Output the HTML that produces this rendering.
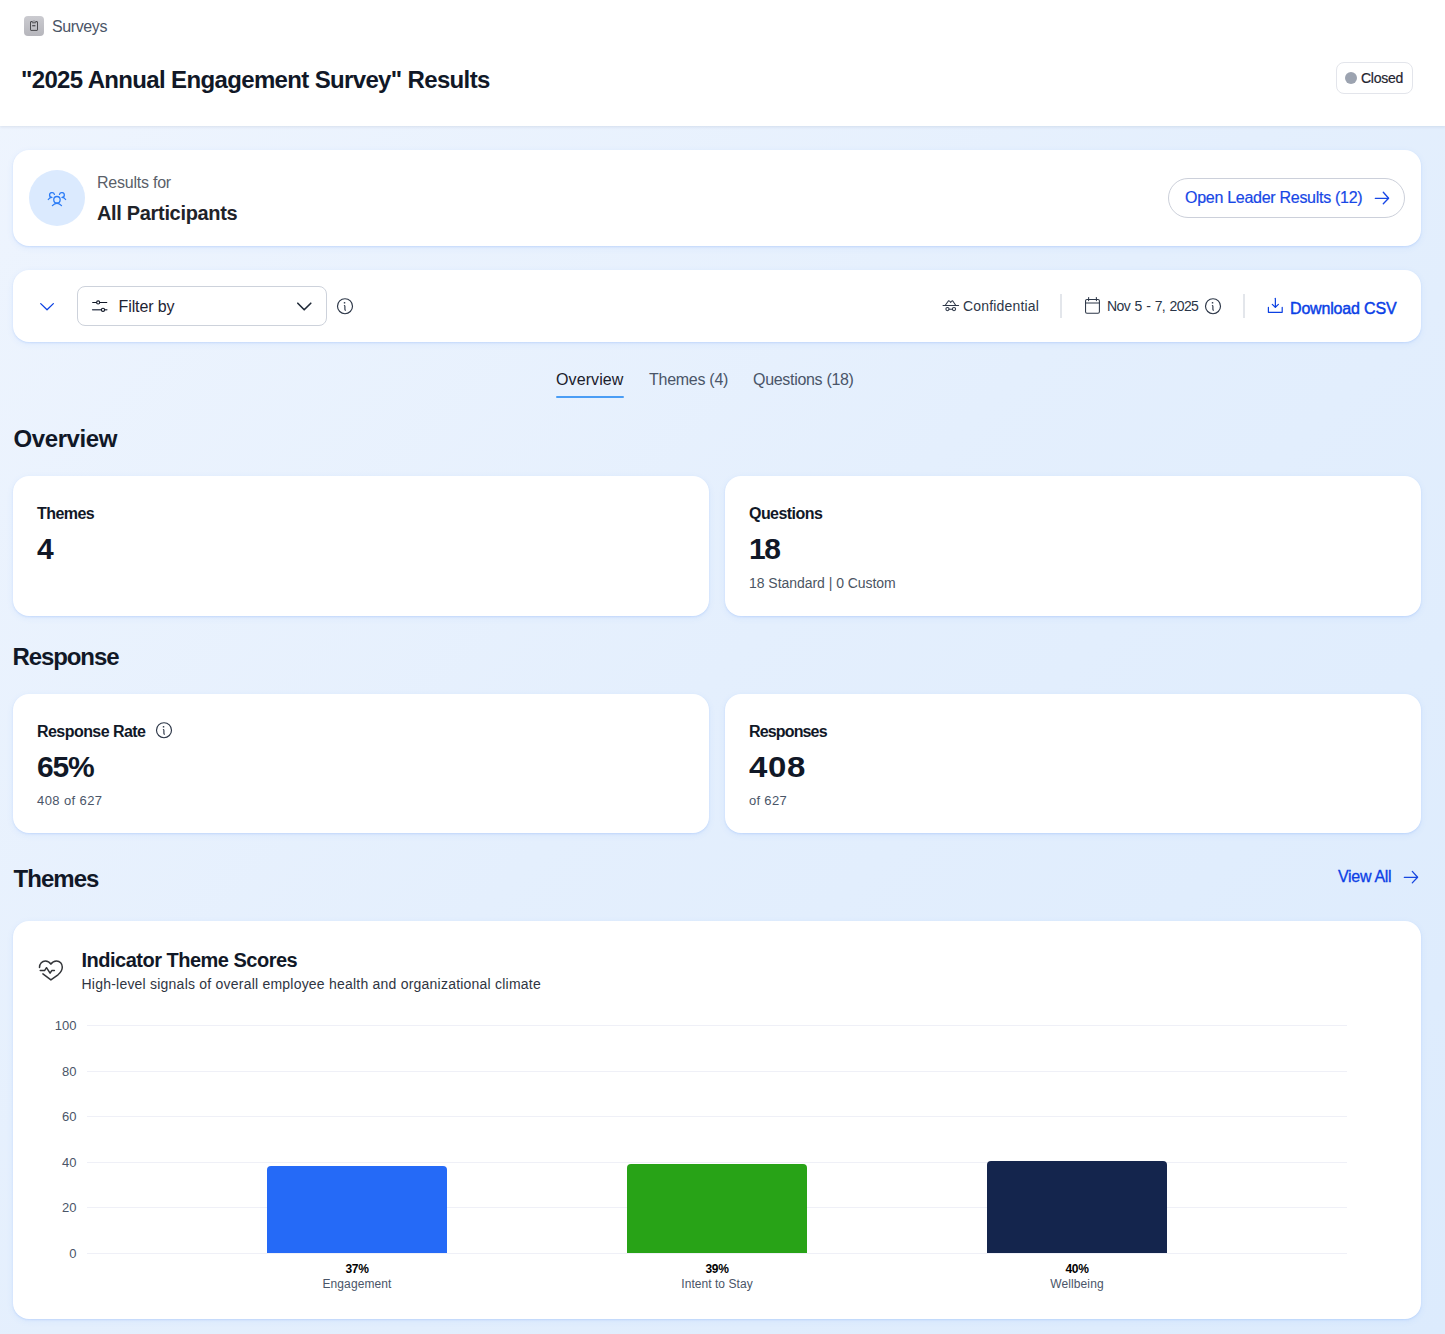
<!DOCTYPE html>
<html>
<head>
<meta charset="utf-8">
<style>
*{margin:0;padding:0;box-sizing:border-box;}
html,body{width:1445px;height:1334px;overflow:hidden;}
body{position:relative;font-family:"Liberation Sans",sans-serif;background:linear-gradient(135deg,#eff5fe 0%,#e4effd 50%,#dcebfd 100%);}
.a{position:absolute;}
.t{position:absolute;line-height:1;white-space:nowrap;}
.b{font-weight:bold;}
.hdr{position:absolute;left:0;top:0;width:1445px;height:126px;background:#fff;box-shadow:0 1px 3px rgba(30,50,90,0.10);}
.card{position:absolute;background:#fff;border-radius:16px;box-shadow:0 1px 2px rgba(59,130,246,0.16),0 2px 7px rgba(59,130,246,0.08);}
svg{position:absolute;overflow:visible;}
</style>
</head>
<body>

<!-- HEADER -->
<div class="hdr"></div>
<div class="a" style="left:24px;top:16px;width:20px;height:20px;border-radius:4px;background:linear-gradient(180deg,#cbcbd0,#b6b6bc);"></div>
<svg style="left:18px;top:10px" width="32" height="32" viewBox="0 0 32 32">
  <rect x="12.5" y="11.5" width="7" height="8.9" rx="0.5" fill="none" stroke="#4a4a4e" stroke-width="1"/>
  <path d="M14.1 11.3 V12.4 Q14.1 12.8 14.5 12.8 H17.5 Q17.9 12.8 17.9 12.4 V11.3" fill="#b9b9be" stroke="#4a4a4e" stroke-width="1"/>
  <rect x="14.8" y="10.2" width="2.4" height="1.4" fill="#a5a5aa"/>
  <line x1="14.2" y1="15.7" x2="17.4" y2="15.7" stroke="#505055" stroke-width="1.3"/>
</svg>
<div class="t" style="left:52px;top:18.5px;font-size:16px;color:#4b5567;letter-spacing:-0.4px">Surveys</div>
<div class="t b" style="left:21px;top:67.6px;font-size:24px;color:#111827;letter-spacing:-0.65px">"2025 Annual Engagement Survey" Results</div>

<div class="a" style="left:1336px;top:62px;width:77px;height:32px;border:1px solid #e3e5eb;border-radius:8px;background:#fff"></div>
<div class="a" style="left:1345px;top:72px;width:12px;height:12px;border-radius:50%;background:#9ca3b0"></div>
<div class="t" style="left:1361px;top:71.2px;font-size:14px;color:#1f2430;letter-spacing:-0.25px;-webkit-text-stroke:0.2px #1f2430">Closed</div>

<!-- CARD 1 -->
<div class="card" style="left:13px;top:150px;width:1408px;height:96px"></div>
<div class="a" style="left:29px;top:170px;width:56px;height:56px;border-radius:50%;background:#dbeafe"></div>
<svg style="left:44px;top:186px" width="26" height="24" viewBox="0 0 26 24">
  <g fill="none" stroke="#2b7cf6" stroke-width="1.3" stroke-linecap="round" stroke-linejoin="round">
    <circle cx="12.95" cy="13.7" r="3.2"/>
    <path d="M8.4 19.6 Q12.95 15.0 17.5 19.6"/>
    <path d="M10.4 8.4 A2.45 2.45 0 1 0 7.9 11.45 Q5.5 11.6 4.3 13.5"/>
    <path d="M15.5 8.4 A2.45 2.45 0 1 1 18.0 11.45 Q20.4 11.6 21.6 13.5"/>
  </g>
</svg>
<div class="t" style="left:97px;top:174.6px;font-size:16px;color:#5a5f69;letter-spacing:-0.23px">Results for</div>
<div class="t b" style="left:97px;top:203px;font-size:20px;color:#1f2329;letter-spacing:-0.33px">All Participants</div>

<div class="a" style="left:1168px;top:178px;width:237px;height:40px;border:1px solid #ccd0da;border-radius:20px;background:#fff"></div>
<div class="t" style="left:1185px;top:189.8px;font-size:16px;color:#1747e6;letter-spacing:-0.28px;-webkit-text-stroke:0.2px #1747e6">Open Leader Results (12)</div>
<svg style="left:1370px;top:188px" width="24" height="22" viewBox="0 0 24 22">
  <g fill="none" stroke="#1747e6" stroke-width="1.35" stroke-linecap="round" stroke-linejoin="round"><path d="M5.3 10.3 H18.4"/><path d="M13.3 4.3 L18.6 10.3 L13.3 15.8"/></g>
</svg>

<!-- CARD 2 FILTER -->
<div class="card" style="left:13px;top:270px;width:1408px;height:72px"></div>
<svg style="left:36px;top:296px" width="22" height="20" viewBox="0 0 22 20">
  <path d="M4.72 7.6 L11.04 13.7 L17.36 7.6" fill="none" stroke="#0b40e2" stroke-width="1.3" stroke-linecap="round" stroke-linejoin="round"/>
</svg>
<div class="a" style="left:77px;top:286px;width:250px;height:40px;border:1px solid #cdd2db;border-radius:8px;background:#fff"></div>
<svg style="left:89px;top:296px" width="22" height="20" viewBox="0 0 22 20">
  <g stroke="#111827" stroke-linecap="round">
    <path d="M3.65 6.4 H17.8" stroke-width="1.05"/>
    <path d="M3.65 13.85 H17.8" stroke-width="1.5" stroke="#4b5262"/>
    <circle cx="9.13" cy="6.4" r="1.55" fill="#fff" stroke-width="1.1"/>
    <circle cx="14" cy="13.85" r="1.6" fill="#fff" stroke-width="1.15"/>
  </g>
</svg>
<div class="t" style="left:118.5px;top:298.7px;font-size:16px;color:#1e2433;letter-spacing:-0.1px">Filter by</div>
<svg style="left:297px;top:302px" width="15" height="9" viewBox="0 0 15 9">
  <path d="M0.8 1.2 L7.2 7.8 L13.8 1.2" fill="none" stroke="#1f2937" stroke-width="1.6" stroke-linecap="round" stroke-linejoin="round"/>
</svg>
<svg style="left:334px;top:295px" width="22" height="22" viewBox="0 0 22 22">
  <circle cx="11" cy="11.2" r="7.5" fill="none" stroke="#2d3748" stroke-width="1.15"/>
  <circle cx="10.55" cy="7.75" r="0.85" fill="#2d3748"/><path d="M10.4 10.55 Q10.9 10.7 10.9 11.5 V14.2 Q10.9 14.9 11.4 15.2" fill="none" stroke="#2d3748" stroke-width="1.15" stroke-linecap="round"/>
</svg>

<svg style="left:940px;top:296px" width="22" height="20" viewBox="0 0 22 20">
  <g fill="none" stroke="#2d3748" stroke-width="1.05" stroke-linecap="round" stroke-linejoin="round">
    <path d="M3.05 9.44 H18.6"/><path d="M5.3 9.2 L8.5 4.7 Q9.6 4.6 10.66 6.4 Q11.6 4.6 12.6 4.7 L15.7 9.2"/>
    <circle cx="7.46" cy="13.1" r="1.6"/><circle cx="14" cy="13.1" r="1.6"/><path d="M9.06 13.3 H12.4"/>
  </g>
</svg>
<div class="t" style="left:963px;top:299px;font-size:14px;color:#2d3748;letter-spacing:0.17px">Confidential</div>
<div class="a" style="left:1060px;top:294px;width:2px;height:24px;background:#e3e6eb"></div>
<svg style="left:1082px;top:294px" width="22" height="22" viewBox="0 0 22 22">
  <g fill="none" stroke="#2d3748" stroke-width="1.05" stroke-linecap="round">
    <rect x="3.55" y="5.45" width="13.85" height="13.75" rx="1.4"/><path d="M3.55 9 H17.4" stroke-width="1.2"/><path d="M6.6 3.6 V6.6"/><path d="M14.4 3.6 V6.6"/>
  </g>
</svg>
<div class="t" style="left:1107px;top:299px;font-size:14px;color:#2a3547;letter-spacing:-0.62px;word-spacing:1.2px">Nov 5 - 7, 2025</div>
<svg style="left:1202px;top:295px" width="22" height="22" viewBox="0 0 22 22">
  <circle cx="11" cy="11.2" r="7.5" fill="none" stroke="#2d3748" stroke-width="1.15"/>
  <circle cx="10.55" cy="7.75" r="0.85" fill="#2d3748"/><path d="M10.4 10.55 Q10.9 10.7 10.9 11.5 V14.2 Q10.9 14.9 11.4 15.2" fill="none" stroke="#2d3748" stroke-width="1.15" stroke-linecap="round"/>
</svg>
<div class="a" style="left:1243px;top:294px;width:2px;height:24px;background:#e3e6eb"></div>
<svg style="left:1264px;top:294px" width="24" height="24" viewBox="0 0 24 24">
  <g fill="none" stroke="#0b40e2" stroke-width="1.2" stroke-linecap="round" stroke-linejoin="round">
    <path d="M11.37 4.3 V13"/><path d="M8.28 10.4 L11.37 13.3 L14.4 10.4"/><path d="M4.4 13.3 V18.35 H18.2 V13.3"/>
  </g>
</svg>
<div class="t" style="left:1290px;top:301.2px;font-size:16px;color:#0b3fe6;letter-spacing:-0.17px;-webkit-text-stroke:0.45px #0b3fe6">Download CSV</div>

<!-- TABS -->
<div class="t" style="left:556px;top:371.5px;font-size:16px;color:#1a202c;letter-spacing:0.1px">Overview</div>
<div class="a" style="left:556px;top:396px;width:68px;height:2px;background:#4a9df5;border-radius:1px"></div>
<div class="t" style="left:649px;top:371.5px;font-size:16px;color:#4a5568;letter-spacing:-0.27px">Themes (4)</div>
<div class="t" style="left:753px;top:371.5px;font-size:16px;color:#4a5568;letter-spacing:-0.31px">Questions (18)</div>

<!-- OVERVIEW -->
<div class="t b" style="left:13.5px;top:426.5px;font-size:24px;color:#111827;letter-spacing:-0.4px">Overview</div>
<div class="card" style="left:13px;top:476px;width:696px;height:140px"></div>
<div class="card" style="left:725px;top:476px;width:696px;height:140px"></div>
<div class="t b" style="left:37px;top:505.5px;font-size:16px;color:#111827;letter-spacing:-0.55px">Themes</div>
<div class="t b" style="left:37px;top:534.3px;font-size:30px;color:#111827">4</div>
<div class="t b" style="left:749px;top:505.5px;font-size:16px;color:#111827;letter-spacing:-0.55px">Questions</div>
<div class="t b" style="left:749px;top:534.3px;font-size:30px;color:#111827;letter-spacing:-1.5px">18</div>
<div class="t" style="left:749px;top:576.2px;font-size:14px;color:#4b5563;letter-spacing:-0.04px">18 Standard | 0 Custom</div>

<!-- RESPONSE -->
<div class="t b" style="left:12.5px;top:645px;font-size:24px;color:#111827;letter-spacing:-1.1px">Response</div>
<div class="card" style="left:13px;top:694px;width:696px;height:139px"></div>
<div class="card" style="left:725px;top:694px;width:696px;height:139px"></div>
<div class="t b" style="left:37px;top:723.5px;font-size:16px;color:#111827;letter-spacing:-0.55px">Response Rate</div>
<svg style="left:153px;top:719px" width="22" height="22" viewBox="0 0 22 22">
  <circle cx="11" cy="11.2" r="7.5" fill="none" stroke="#2d3748" stroke-width="1.15"/>
  <circle cx="10.55" cy="7.75" r="0.85" fill="#2d3748"/><path d="M10.4 10.55 Q10.9 10.7 10.9 11.5 V14.2 Q10.9 14.9 11.4 15.2" fill="none" stroke="#2d3748" stroke-width="1.15" stroke-linecap="round"/>
</svg>
<div class="t b" style="left:37px;top:752.4px;font-size:30px;color:#111827;letter-spacing:-1.2px">65%</div>
<div class="t" style="left:37px;top:793.7px;font-size:13px;color:#4a5568;letter-spacing:0.4px">408 of 627</div>
<div class="t b" style="left:749px;top:723.5px;font-size:16px;color:#111827;letter-spacing:-0.85px">Responses</div>
<div class="t b" style="left:749px;top:752.4px;font-size:30px;color:#111827;letter-spacing:0.6px;transform:scaleX(1.1);transform-origin:0 0">408</div>
<div class="t" style="left:749px;top:793.7px;font-size:13px;color:#4a5568;letter-spacing:0.3px">of 627</div>

<!-- THEMES -->
<div class="t b" style="left:13.5px;top:867px;font-size:24px;color:#111827;letter-spacing:-0.95px">Themes</div>
<div class="t" style="left:1338px;top:868.5px;font-size:16px;color:#0b3fe6;letter-spacing:-0.3px;-webkit-text-stroke:0.3px #0b3fe6">View All</div>
<svg style="left:1399px;top:866px" width="24" height="22" viewBox="0 0 24 22">
  <g fill="none" stroke="#1646e0" stroke-width="1.3" stroke-linecap="round" stroke-linejoin="round"><path d="M5.3 11.3 H18.4"/><path d="M13.3 5.4 L18.6 11.3 L13.3 16.9"/></g>
</svg>

<div class="card" style="left:13px;top:921px;width:1408px;height:398px"></div>
<svg style="left:34px;top:954px" width="34" height="32" viewBox="0 0 34 32">
  <g fill="none" stroke="#333539" stroke-width="1.5" stroke-linecap="round" stroke-linejoin="round">
    <path d="M5.5 13.4 C5.6 9.6 8.2 7 11.3 7 C13.9 7 15.8 8.4 16.9 10.2 C18 8.4 19.9 7 22.55 7 C25.9 7 28.3 9.8 28.3 13 C28.3 16.2 26.6 18.6 24 20.8 L16.9 25.9 L8.9 19.9"/>
    <path d="M6.24 16.55 H10.56 L12.5 13.7 L16.07 19.2 L17.75 16.55 H20.4"/>
  </g>
</svg>
<div class="t b" style="left:81.5px;top:950.2px;font-size:20px;color:#111827;letter-spacing:-0.5px">Indicator Theme Scores</div>
<div class="t" style="left:81.5px;top:977px;font-size:14px;color:#2f3542;letter-spacing:0.22px">High-level signals of overall employee health and organizational climate</div>

<!-- CHART -->
<div id="chart"></div>
<div class="a" style="left:87px;top:1025px;width:1260px;height:1px;background:#eff0f7"></div>
<div class="a" style="left:87px;top:1071px;width:1260px;height:1px;background:#eff0f7"></div>
<div class="a" style="left:87px;top:1116px;width:1260px;height:1px;background:#eff0f7"></div>
<div class="a" style="left:87px;top:1162px;width:1260px;height:1px;background:#eff0f7"></div>
<div class="a" style="left:87px;top:1207px;width:1260px;height:1px;background:#eff0f7"></div>
<div class="a" style="left:87px;top:1253px;width:1260px;height:1px;background:#eff0f7"></div>

<div class="t" style="left:0;width:76.5px;text-align:right;top:1019px;font-size:13px;color:#4a5568">100</div>
<div class="t" style="left:0;width:76.5px;text-align:right;top:1065px;font-size:13px;color:#4a5568">80</div>
<div class="t" style="left:0;width:76.5px;text-align:right;top:1110px;font-size:13px;color:#4a5568">60</div>
<div class="t" style="left:0;width:76.5px;text-align:right;top:1156px;font-size:13px;color:#4a5568">40</div>
<div class="t" style="left:0;width:76.5px;text-align:right;top:1201px;font-size:13px;color:#4a5568">20</div>
<div class="t" style="left:0;width:76.5px;text-align:right;top:1247px;font-size:13px;color:#4a5568">0</div>

<div class="a" style="left:267px;top:1166px;width:180px;height:87px;background:#256af7;border-radius:4px 4px 0 0"></div>
<div class="a" style="left:627px;top:1163.7px;width:180px;height:89.3px;background:#28a317;border-radius:4px 4px 0 0"></div>
<div class="a" style="left:987px;top:1161.4px;width:180px;height:91.6px;background:#14254d;border-radius:4px 4px 0 0"></div>

<div class="t b" style="left:257px;width:200px;text-align:center;top:1262.5px;font-size:12px;color:#000;letter-spacing:-0.4px">37%</div>
<div class="t" style="left:257px;width:200px;text-align:center;top:1277.6px;font-size:12px;color:#4a5568;letter-spacing:0.1px">Engagement</div>
<div class="t b" style="left:617px;width:200px;text-align:center;top:1262.5px;font-size:12px;color:#000;letter-spacing:-0.4px">39%</div>
<div class="t" style="left:617px;width:200px;text-align:center;top:1277.6px;font-size:12px;color:#4a5568;letter-spacing:0.05px">Intent to Stay</div>
<div class="t b" style="left:977px;width:200px;text-align:center;top:1262.5px;font-size:12px;color:#000;letter-spacing:-0.4px">40%</div>
<div class="t" style="left:977px;width:200px;text-align:center;top:1277.6px;font-size:12px;color:#4a5568;letter-spacing:0.1px">Wellbeing</div>

</body>
</html>
